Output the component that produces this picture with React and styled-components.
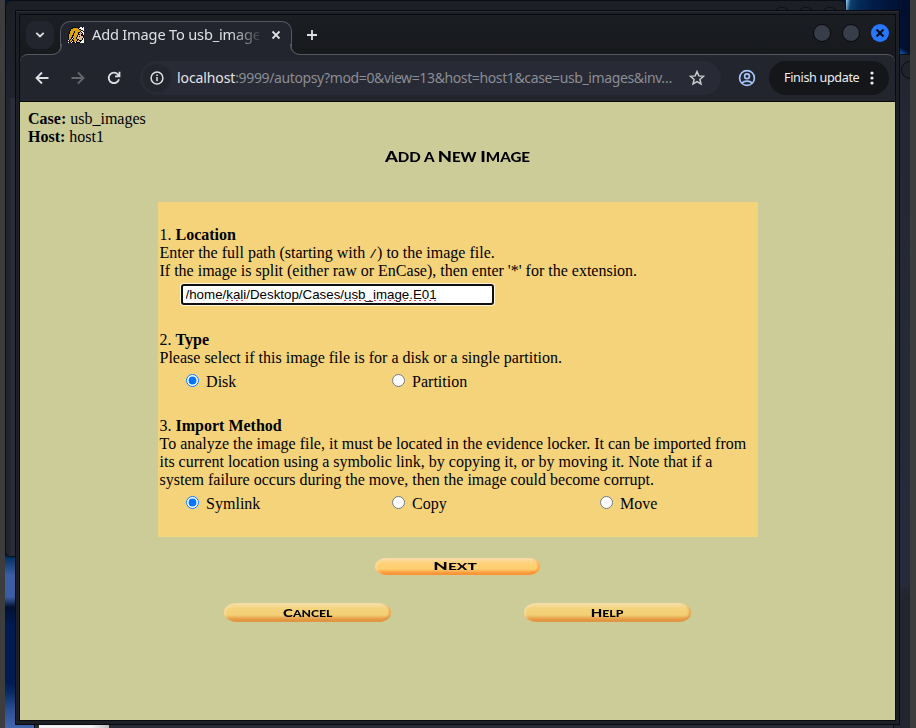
import React from "react";
import styled, { createGlobalStyle, css } from "styled-components";

const Global = createGlobalStyle`
  * { box-sizing: border-box; }
  html, body { margin: 0; padding: 0; overflow: hidden; background: #3d3d3d; }
`;

const Desktop = styled.div`
  position: relative;
  width: 916px;
  height: 728px;
  padding: 10px 16px 3px 15px;
  overflow: hidden;
  background: #3d3d3d;
`;

const Wallpaper = styled.div`
  position: absolute;
  inset: 0 6px 0 5px;
  overflow: hidden;
  background: linear-gradient(#00153c 0 555px, #043463 558px, #3c5da4 575px, #3c5da4 597px, #021230 607px,
    #001a52 625px, #001a52 682px, #082a62 692px, #2c4f94 710px, #4265ad 728px);
`;

const WallpaperGlow = styled.div`
  position: absolute;
  left: 841px;
  top: 0;
  width: 64px;
  height: 54px;
  background:
    linear-gradient(215deg, transparent 60%, #0a55aa 85%, #1673c8 100%) 50px 38px / 14px 16px no-repeat,
    linear-gradient(100deg, #9fd4f2 0, #0b3f70 5px, #052a56 14px, #021c4a 28px, #01102f 56px);
`;

const BackWindow = styled.div`
  position: absolute;
  border: 1px solid #0c0d11;
  ${({ $place }) =>
    ({
      left: css`left: 0; top: 0; width: 841px; height: 557px; border-radius: 6px 6px 5px 5px;
        background: linear-gradient(#1d1f26 0 9px, #20232d 97px, transparent 97px), linear-gradient(90deg, #22242d 4px, #2a2c39 5px);`,
      right: css`left: 700px; top: 54px; width: 212px; height: 680px;
        background: linear-gradient(#22252e 0, #242733 60px, #272a38 530px, #22242f 540px);`,
      bottom: css`left: 29px; top: 600px; width: 860px; height: 140px; background: #292b36;`,
    })[$place]}
`;

const BackButton = styled.span`
  position: absolute;
  left: ${({ $x }) => $x}px;
  top: ${({ $y }) => $y}px;
  width: 18px;
  height: 18px;
  border: 1px solid #0c0d11;
  border-radius: 50%;
  background: #20232b;
`;

const PaleSheet = styled.div`
  position: absolute;
  left: 34px;
  top: 720px;
  width: 70px;
  height: 8px;
  background: linear-gradient(90deg, #efefef 75%, #bdbdbd);
`;

const BrowserFrame = styled.div`
  position: relative;
  width: 885px;
  height: 715px;
  padding: 3px;
  border: 1px solid #08090c;
  background: #1c1f25;
  box-shadow: inset 0 1px #2c2e35;
`;

const Browser = styled.div`
  display: flex;
  flex-direction: column;
  width: 877px;
  height: 707px;
  border: 1px solid #090a0d;
  background: #181a1e;
`;

const TabStrip = styled.div`
  display: flex;
  height: 39px;
  flex: none;
  padding: 6px 6px 0 6px;
  background: linear-gradient(#1b1e23, #17191d);
`;

const TabSearch = styled.button`
  display: grid;
  place-items: center;
  width: 28px;
  height: 28px;
  margin: 0 6px 0 0;
  padding: 0;
  border: 0;
  border-radius: 9px;
  background: #23252e;
`;

const Tab = styled.div`
  position: relative;
  display: flex;
  align-items: flex-start;
  width: 232px;
  height: 34px;
  padding: 5px 0 0 7px;
  border: 1px solid #55585e;
  border-bottom: 0;
  border-radius: 10px 10px 0 0;
  background: #23252e;
  z-index: 1;
  &::before, &::after {
    content: "";
    position: absolute;
    bottom: 0;
    width: 10px;
    height: 10px;
    border-bottom: 1px solid #55585e;
  }
  &::before {
    left: -10px;
    border-right: 1px solid #55585e;
    border-bottom-right-radius: 10px;
    box-shadow: 4px 4px 0 3px #23252e;
    clip-path: inset(0 -1px 0 0);
  }
  &::after {
    right: -10px;
    border-left: 1px solid #55585e;
    border-bottom-left-radius: 10px;
    box-shadow: -4px 4px 0 3px #23252e;
    clip-path: inset(0 0 0 -1px);
  }
`;

const TabTitle = styled.span`
  width: 167px;
  height: 17px;
  margin-left: 8px;
  white-space: nowrap;
  font: 14.6px/15px "Noto Sans", sans-serif;
  letter-spacing: -0.18px;
  color: #dfe0e3;
  mask-image: linear-gradient(90deg, #000 138px, rgba(0, 0, 0, 0.15) 167px);
`;

const PlainIcon = styled.svg`
  display: block;
  flex: none;
  fill: none;
  stroke: ${({ $tone }) => $tone || "#dfe0e3"};
  stroke-width: ${({ $weight }) => $weight || 1.8};
`;

const CloseTab = styled.button`
  margin: 3px 0 0 12px;
  padding: 0;
  border: 0;
  background: none;
`;

const NewTab = styled(CloseTab)`
  display: block;
  height: 14px;
  margin: 7px 0 0 13px;
`;

const WindowControls = styled.div`
  display: flex;
  gap: 11px;
  margin: 3px 0 0 auto;
`;

const WindowDot = styled.button`
  display: grid;
  place-items: center;
  width: 18px;
  height: 18px;
  padding: 0;
  border: ${({ $active }) => ($active ? "0" : "1px solid #08090c")};
  border-radius: 50%;
  background: ${({ $active }) => ($active ? "#2777ff" : "#373d49")};
`;

const Toolbar = styled.div`
  display: flex;
  align-items: center;
  height: 48px;
  flex: none;
  padding: 0 6px 1px 15px;
  border-top: 1px solid #55585e;
  border-bottom: 1px solid #08090c;
  border-radius: 8px 8px 0 0;
  background: #23252e;
`;

const NavButtons = styled.div`
  display: flex;
  gap: 22px;
  width: 105px;
`;

const AddressBar = styled.div`
  display: flex;
  align-items: center;
  width: 581px;
  height: 34px;
  padding-left: 3px;
  border-radius: 17px;
  background: #282a35;
`;

const SiteInfo = styled.span`
  display: grid;
  place-items: center;
  width: 28px;
  height: 28px;
  border-radius: 50%;
  background: #23252e;
`;

const Url = styled.span`
  width: 512px;
  margin-left: 6px;
  white-space: nowrap;
  font: 14px/20px "Noto Sans", sans-serif;
  letter-spacing: -0.38px;
  color: #8b8d94;
`;

const Host = styled.span`
  letter-spacing: -0.1px;
  color: #e3e4e7;
`;

const Profile = styled.span`
  margin-left: 17px;
`;

const UpdateButton = styled.button`
  display: flex;
  align-items: center;
  justify-content: space-between;
  width: 120px;
  height: 34px;
  margin-left: auto;
  padding: 0 15px;
  border: 0;
  border-radius: 17px;
  background: #15161a;
  color: #eeeff1;
  font: 12.6px/20px "Noto Sans", sans-serif;
  letter-spacing: -0.35px;
  white-space: nowrap;
`;

const UpdateLabel = styled.span`
  padding-top: 1px;
`;

const Page = styled.main`
  flex: 1;
  padding: 8px;
  background: #cccc99;
  color: #000;
  font: 16px/18px "Liberation Serif", serif;
`;

const Engraved = styled.span`
  display: inline-block;
  font: 900 ${({ $size }) => $size}px/18px Lato, sans-serif;
  text-transform: uppercase;
  white-space: nowrap;
  transform: scaleX(${({ $stretch }) => $stretch});
`;

const Initial = styled.span`
  font-size: 1.22em;
`;

const TitleRow = styled.h1`
  display: flex;
  justify-content: center;
  height: 56px;
  margin: 0;
  padding-top: 1px;
`;

const Panel = styled.section`
  width: 600px;
  height: 335px;
  margin: 0 auto;
  padding: 24px 2px 0;
  background: #f5d37b;
`;

const Step = styled.div`
  height: ${({ $height }) => $height}px;
`;

const Paragraph = styled.p`
  margin: 0;
  white-space: pre-line;
`;

const Slash = styled.code`
  font: 13px/1 "Liberation Mono", monospace;
`;

const PathField = styled.div`
  position: relative;
  width: 313px;
  margin: 4px 0 0 21px;
`;

const PathInput = styled.input`
  display: block;
  width: 313px;
  height: 21px;
  padding: 0 3px;
  border: 2px solid #101010;
  border-radius: 3px;
  outline: 0;
  box-shadow: 0 0 0 1px #fff4d8;
  background: #fff;
  color: #000;
  font: 13.333px/15px "Liberation Sans", sans-serif;
`;

const Misspelling = styled.span`
  position: absolute;
  left: ${({ $left }) => $left}px;
  top: 16px;
  width: ${({ $width }) => $width}px;
  height: 1px;
  background: repeating-linear-gradient(90deg, #f0405f 0 2px, transparent 2px 5px);
`;

const Choices = styled.div`
  display: grid;
  grid-template-columns: 206px 208px 120px;
  margin: 6px 0 0 26px;
`;

const Choice = styled.label`
  display: flex;
  height: 18px;
`;

const Radio = styled.input`
  width: 13px;
  height: 13px;
  margin: 1px 7.6px 0 0;
`;

const Actions = styled.div`
  display: flex;
  justify-content: center;
  gap: 133px;
  padding-top: ${({ $top }) => $top}px;
`;

const PillButton = styled.button`
  display: flex;
  align-items: center;
  justify-content: center;
  width: ${({ $bright }) => ($bright ? 165 : 167)}px;
  height: ${({ $bright }) => ($bright ? 17 : 19)}px;
  padding: ${({ $bright }) => ($bright ? "0 4px 0 0" : "0")};
  border: 0;
  border-radius: 12px / 9px;
  color: #000;
  background: ${({ $bright }) =>
    $bright
      ? "linear-gradient(#f8dfae 0, #ffd27a 5px, #ffce70 11px, #ff9a3c 15px, #f29038)"
      : "linear-gradient(#f5e0aa 0, #f5d37b 6px, #f3cf75 12px, #e69c46 16px, #df9341)"};
  box-shadow: inset 2px 1px 2px #f7dfab99, inset -2px -1px 2px ${({ $bright }) => ($bright ? "#ff9030aa" : "#df9341aa")};
`;

const HOUND = [
  ".....KKKKK.KWWKW",
  "...KKYYYYYKWWWWW",
  "..KYYYYYYYYKKWWW",
  "..KYYYYYYYYYYKKW",
  ".KYYYYKYYYYYKWWK",
  ".KYYYYKYYYKKTKWW",
  ".KYYYKYYYYKTTTKW",
  "KYYYYKYYYYKKTKKW",
  "KYYYKKYYYKTTTKKK",
  "KYYYKYYYYKTKTTTK",
  "KYYKKYYYKTTTTTTK",
  "KYYKWKYYKTTTTTKW",
  "KYKYKYYYYKKTTTKW",
  "WKYYKKYYYKTKKKWW",
  ".KYKWKYYKTTTKWWW",
  "WKKWKKKWKKKKWWWW",
];
const HOUND_COLORS = { K: "#080808", Y: "#dda20c", T: "#e0b993", W: "#f6f6f6" };

function Favicon() {
  return (
    <svg width="16" height="16" shapeRendering="crispEdges">
      {HOUND.flatMap((row, y) =>
        [...row].map((c, x) =>
          c === "." ? null : <rect key={`${x}-${y}`} x={x} y={y} width="1" height="1" fill={HOUND_COLORS[c]} />
        )
      )}
    </svg>
  );
}

function SmallCaps({ text, size, stretch }) {
  return (
    <Engraved $size={size} $stretch={stretch}>
      {text.split(" ").map((word, i) => (
        <React.Fragment key={i}>
          {i > 0 && " "}
          {/[A-Z]/.test(word[0]) ? <><Initial>{word[0]}</Initial>{word.slice(1)}</> : word}
        </React.Fragment>
      ))}
    </Engraved>
  );
}

function Option({ group, label, checked }) {
  return (
    <Choice>
      <Radio type="radio" name={group} defaultChecked={checked} />
      {label}
    </Choice>
  );
}

export default function App() {
  return (
    <Desktop>
      <Global />
      <Wallpaper>
        <BackWindow $place="left" />
        <WallpaperGlow />
        <BackButton $x={768} $y={7} />
        <BackButton $x={792} $y={7} />
        <BackButton $x={816} $y={7} />
        <BackWindow $place="right" />
        <BackButton $x={896} $y={61} />
        <BackWindow $place="bottom" />
        <PaleSheet />
      </Wallpaper>
      <BrowserFrame>
        <Browser>
          <TabStrip>
            <TabSearch>
              <PlainIcon width="10" height="8"><path d="M1.3 1.8 5 5.5l3.7-3.7" /></PlainIcon>
            </TabSearch>
            <Tab>
              <Favicon />
              <TabTitle>Add Image To usb_image</TabTitle>
              <CloseTab>
                <PlainIcon width="10" height="10"><path d="m1.5 1.5 7 7m0-7-7 7" /></PlainIcon>
              </CloseTab>
            </Tab>
            <NewTab>
              <PlainIcon width="14" height="14"><path d="M7 2v10M2 7h10" /></PlainIcon>
            </NewTab>
            <WindowControls>
              <WindowDot />
              <WindowDot />
              <WindowDot $active>
                <PlainIcon width="10" height="10" $tone="#080b14" $weight={2.2}><path d="m1.5 1.5 7 7m0-7-7 7" /></PlainIcon>
              </WindowDot>
            </WindowControls>
          </TabStrip>
          <Toolbar>
            <NavButtons>
              <PlainIcon width="14" height="14"><path d="M13.5 7H2M7 1.5 1.5 7 7 12.5" /></PlainIcon>
              <PlainIcon width="14" height="14" $tone="#65676d"><path d="M.5 7H12M7 1.5 12.5 7 7 12.5" /></PlainIcon>
              <PlainIcon width="14" height="14"><path d="M12 8.2A5.2 5.2 0 1 1 10.8 3.4L12.5 5M12.5.8V5.4H8" /></PlainIcon>
            </NavButtons>
            <AddressBar>
              <SiteInfo>
                <PlainIcon width="14" height="14" $weight={1.5}><circle cx="7" cy="7" r="5.9" /><path d="M7 6v4.2M7 3.6v1.5" /></PlainIcon>
              </SiteInfo>
              <Url><Host>localhost</Host>:9999/autopsy?mod=0&amp;view=13&amp;host=host1&amp;case=usb_images&amp;inv…</Url>
              <PlainIcon width="16" height="16" $tone="#c9cacd" $weight={1.5}>
                <path d="m8 1.6 1.8 4.3 4.7.4-3.6 3.1 1.1 4.6L8 11.6 4 14l1.1-4.6-3.6-3.1 4.7-.4z" />
              </PlainIcon>
            </AddressBar>
            <Profile>
              <PlainIcon width="18" height="18" $tone="#a7c5fb" $weight={1.7}>
                <circle cx="9" cy="9" r="7.4" /><circle cx="9" cy="7.2" r="2.4" /><path d="M3.8 14c2.6-2.6 7.8-2.6 10.4 0" />
              </PlainIcon>
            </Profile>
            <UpdateButton>
              <UpdateLabel>Finish update</UpdateLabel>
              <svg width="4" height="14" fill="#eeeff1"><circle cx="2" cy="2" r="1.6" /><circle cx="2" cy="7" r="1.6" /><circle cx="2" cy="12" r="1.6" /></svg>
            </UpdateButton>
          </Toolbar>
          <Page>
            <Paragraph><b>Case:</b> usb_images</Paragraph>
            <Paragraph><b>Host:</b> host1</Paragraph>
            <TitleRow><SmallCaps text="Add a New Image" size={12.4} stretch={1.22} /></TitleRow>
            <Panel>
              <Step $height={105}>
                <Paragraph>1. <b>Location</b></Paragraph>
                <Paragraph>Enter the full path (starting with <Slash>/</Slash>) to the image file.</Paragraph>
                <Paragraph>If the image is split (either raw or EnCase), then enter '*' for the extension.</Paragraph>
                <PathField>
                  <PathInput defaultValue="/home/kali/Desktop/Cases/usb_image.E01" spellCheck={false} />
                  <Misspelling $left={45} $width={20} />
                  <Misspelling $left={163} $width={92} />
                </PathField>
              </Step>
              <Step $height={86}>
                <Paragraph>2. <b>Type</b></Paragraph>
                <Paragraph>Please select if this image file is for a disk or a single partition.</Paragraph>
                <Choices>
                  <Option group="type" label="Disk" checked />
                  <Option group="type" label="Partition" />
                </Choices>
              </Step>
              <Step $height={110}>
                <Paragraph>3. <b>Import Method</b></Paragraph>
                <Paragraph>
                  {"To analyze the image file, it must be located in the evidence locker. It can be imported from\nits current location using a symbolic link, by copying it, or by moving it. Note that if a\nsystem failure occurs during the move, then the image could become corrupt."}
                </Paragraph>
                <Choices>
                  <Option group="method" label="Symlink" checked />
                  <Option group="method" label="Copy" />
                  <Option group="method" label="Move" />
                </Choices>
              </Step>
            </Panel>
            <Actions $top={21}>
              <PillButton $bright><SmallCaps text="Next" size={8.6} stretch={1.8} /></PillButton>
            </Actions>
            <Actions $top={28}>
              <PillButton><SmallCaps text="Cancel" size={9.8} stretch={1.25} /></PillButton>
              <PillButton><SmallCaps text="Help" size={9.8} stretch={1.25} /></PillButton>
            </Actions>
          </Page>
        </Browser>
      </BrowserFrame>
    </Desktop>
  );
}
